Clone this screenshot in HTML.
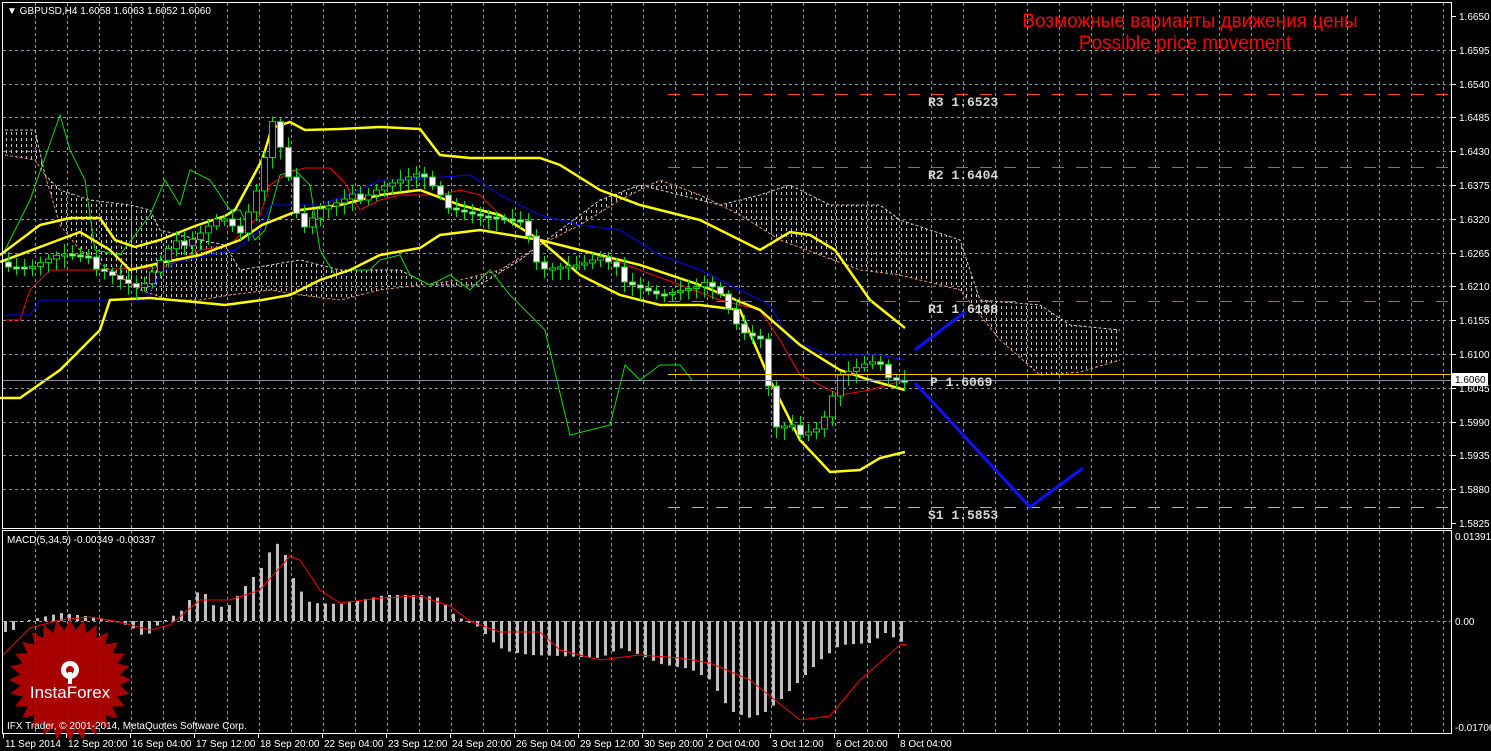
<!DOCTYPE html>
<html><head><meta charset="utf-8"><style>
html,body{margin:0;padding:0;background:#000;}
svg{display:block;}
text{font-family:"Liberation Sans",sans-serif;}
.m{font-family:"Liberation Mono",monospace;font-weight:bold;fill:#d8d8d8;font-size:13px;}
.ax{fill:#fff;font-size:10px;}
</style></head><body>
<svg id="s" width="1491" height="751" xmlns="http://www.w3.org/2000/svg">
<defs>
<pattern id="hp" width="5" height="6" patternUnits="userSpaceOnUse">
<rect x="1" y="0" width="1" height="3" fill="#cfc4c4"/>
</pattern>
</defs>
<rect width="1491" height="751" fill="#000"/>
<g id="grid"></g>
<g id="cloud"></g>
<g id="ind"></g>
<g id="candles"></g>
<g id="macd"></g>
<rect x="2.5" y="2.5" width="1449" height="526" fill="none" stroke="#fff" stroke-width="1"/>
<rect x="2.5" y="530.5" width="1449" height="203" fill="none" stroke="#fff" stroke-width="1"/>
<line x1="668" y1="94.5" x2="1451" y2="94.5" stroke="#ff4a10" stroke-dasharray="12,12"/>
<line x1="668" y1="167.5" x2="1451" y2="167.5" stroke="#e05020" stroke-dasharray="12,12"/>
<line x1="668" y1="301.5" x2="1451" y2="301.5" stroke="#ff4a10" stroke-dasharray="12,12"/>
<line x1="668" y1="507.5" x2="1451" y2="507.5" stroke="#d8a090" stroke-dasharray="12,12"/>
<line x1="668" y1="374.5" x2="1451" y2="374.5" stroke="#ffc000"/>
<line x1="3" y1="380.5" x2="1451" y2="380.5" stroke="#8090a0"/>
<text class="m" x="928" y="106">R3 1.6523</text>
<text class="m" x="928" y="179">R2 1.6404</text>
<text class="m" x="928" y="313">R1 1.6188</text>
<text class="m" x="930" y="386">P 1.6069</text>
<text class="m" x="928" y="519">S1 1.5853</text>
<polyline points="915,350 965,312" stroke="#1010ff" stroke-width="3" fill="none"/>
<polyline points="915,383 1030,507 1083,468" stroke="#1010ff" stroke-width="3" fill="none"/>
<text x="1190" y="27" fill="#ff0000" font-size="19" text-anchor="middle">Возможные варианты движения цены</text>
<text x="1185" y="49" fill="#ff0000" font-size="19" text-anchor="middle">Possible price movement</text>
<text x="7" y="14" fill="#fff" font-size="10">▼ GBPUSD,H4  1.6058 1.6063 1.6052 1.6060</text>
<text x="7" y="543" fill="#fff" font-size="10">MACD(5,34,5) -0.00349 -0.00337</text>
<g id="logo"></g>
<text x="7" y="729" fill="#fff" font-size="10">IFX Trader, © 2001-2014, MetaQuotes Software Corp.</text>
<g id="axis"></g>
<rect x="1452" y="373" width="36" height="13" fill="#fff"/>
<text x="1455" y="383" fill="#000" font-size="10">1.6060</text>
</svg>
<script>
(function(){
var NS="http://www.w3.org/2000/svg";
function el(p,t,a){var e=document.createElementNS(NS,t);for(var k in a)e.setAttribute(k,a[k]);document.getElementById(p).appendChild(e);return e;}
function pl(p,pts,c,w,extra){var a={points:pts.map(function(q){return q.join(",")}).join(" "),fill:"none",stroke:c,"stroke-width":w};for(var k in extra)a[k]=extra[k];return el(p,"polyline",a);}
function interp(pts,x){if(x<=pts[0][0])return pts[0][1];for(var i=1;i<pts.length;i++){if(x<=pts[i][0]){var a=pts[i-1],b=pts[i];return a[1]+(b[1]-a[1])*(x-a[0])/(b[0]-a[0]);}}return pts[pts.length-1][1];}
var k,i,x,y,t;
for(k=0;k<45;k++){x=35+32*k;el("grid","line",{x1:x+.5,y1:3,x2:x+.5,y2:528,stroke:"#8a93a0","stroke-dasharray":"3,3"});el("grid","line",{x1:x+.5,y1:531,x2:x+.5,y2:733,stroke:"#8a93a0","stroke-dasharray":"3,3"});}
var labels=["1.6650","1.6595","1.6540","1.6485","1.6430","1.6375","1.6320","1.6265","1.6210","1.6155","1.6100","1.6045","1.5990","1.5935","1.5880","1.5825"];
for(i=0;i<16;i++){y=Math.round(16+33.8*i);if(i>0&&i<15)el("grid","line",{x1:3,y1:y+.5,x2:1451,y2:y+.5,stroke:"#8a93a0","stroke-dasharray":"3,3"});el("grid","line",{x1:1452,y1:y+.5,x2:1456,y2:y+.5,stroke:"#fff"});t=el("grid","text",{x:1459,y:y+4,"class":"ax"});t.textContent=labels[i];}
el("grid","line",{x1:3,y1:621.5,x2:1451,y2:621.5,stroke:"#8a93a0","stroke-dasharray":"3,3"});
[["0.01391",540],["0.00",625],["-0.01706",731]].forEach(function(a){var t=el("grid","text",{x:1455,y:a[1],"class":"ax"});t.textContent=a[0];});
var up=[[5,130],[35,130],[45,175],[60,190],[90,200],[130,205],[150,210],[160,230],[200,240],[225,245],[240,270],[300,260],[340,270],[400,270],[430,285],[480,285],[520,260],[560,230],[600,200],[640,185],[680,195],[720,205],[760,195],[790,185],[830,205],[880,205],[900,220],[960,240],[980,300],[1040,305],[1070,325],[1120,330]];
var lo=[[5,155],[35,160],[45,175],[60,225],[80,250],[110,270],[140,290],[170,300],[200,300],[230,295],[270,290],[300,295],[340,300],[380,290],[420,285],[460,280],[500,270],[540,245],[580,225],[620,200],[660,180],[700,195],[740,215],[780,240],[820,255],[860,270],[900,275],[960,290],[1000,340],[1040,375],[1080,372],[1120,360]];
el("cloud","polygon",{points:up.concat(lo.slice().reverse()).map(function(q){return q.join(",")}).join(" "),fill:"url(#hp)"});
pl("cloud",up,"#d8c8c8",1,{"stroke-dasharray":"3,2"});
pl("cloud",lo,"#e09060",1,{"stroke-dasharray":"3,2"});
pl("ind",[[5,250],[30,200],[60,115],[70,150],[85,180],[95,250],[120,255],[150,215],[165,180],[180,205],[190,170],[210,180],[230,210],[240,210],[255,240],[265,230],[280,175],[295,170],[310,185],[320,250],[335,275],[350,270],[370,270],[380,260],[400,255],[410,275],[430,285],[450,275],[470,290],[490,270],[510,295],[545,330],[570,435],[590,430],[610,425],[625,365],[640,380],[660,365],[680,365],[692,380]],"#00dd00",1);
pl("ind",[[5,320],[20,320],[30,290],[50,270],[100,270],[130,268],[160,268],[180,260],[200,250],[230,245],[260,215],[270,185],[290,172],[305,168],[330,168],[345,183],[360,210],[380,200],[400,195],[440,195],[460,190],[480,195],[500,215],[540,240],[600,255],[680,285],[720,300],[760,310],[780,340],[800,375],[840,395],[870,390],[905,380]],"#ff0000",1);
pl("ind",[[5,315],[30,315],[40,300],[145,300],[160,275],[175,262],[210,255],[235,250],[260,230],[270,205],[320,205],[360,190],[380,180],[430,178],[470,175],[500,195],[540,215],[580,225],[620,230],[660,255],[700,270],[740,290],[770,305],[790,340],[830,355],[880,355],[905,360]],"#0000ff",1);
pl("ind",[[0,255],[40,225],[70,218],[100,218],[115,240],[135,247],[160,240],[195,226],[225,216],[235,210],[262,160],[272,128],[290,122],[305,130],[340,129],[380,127],[420,129],[440,155],[470,158],[540,158],[560,165],[600,190],[640,205],[700,220],[760,250],[790,232],[810,235],[835,250],[870,300],[905,328]],"#ffff00",2.5);
pl("ind",[[0,262],[40,247],[80,232],[110,250],[130,270],[160,263],[200,255],[240,240],[262,225],[300,210],[340,205],[380,195],[420,190],[460,205],[500,215],[540,240],[580,250],[640,265],[700,285],[760,310],[800,345],[840,370],[870,380],[905,390]],"#ffff00",2.5);
pl("ind",[[0,398],[20,398],[60,370],[100,330],[110,300],[150,298],[195,302],[225,305],[262,300],[290,295],[320,280],[350,270],[380,255],[420,248],[440,235],[480,230],[540,240],[580,275],[620,295],[660,305],[700,305],[740,310],[770,380],[800,440],[830,472],[860,470],[880,458],[905,452]],"#ffff00",2.5);
var cp=[[8,262],[30,265],[60,255],[100,265],[140,290],[170,250],[200,230],[220,215],[240,235],[262,180],[270,110],[285,160],[300,230],[320,210],[340,205],[380,185],[420,175],[440,200],[480,215],[520,225],[540,265],[580,265],[600,260],[620,275],[660,295],[700,290],[715,280],[740,330],[760,340],[775,430],[800,430],[820,425],[840,375],[870,365],[900,378]];
var prev=interp(cp,0);
for(x=8;x<=904;x+=8){var c=interp(cp,x)+((x*37)%11-5);var o=prev;prev=c;var tp=Math.min(o,c),bt=Math.max(o,c);if(bt-tp<2){bt=tp+2;}
var wt=tp-4-((x*13)%7),wb=bt+4+((x*17)%9);
el("candles","line",{x1:x+.5,y1:wt,x2:x+.5,y2:wb,stroke:"#00dd00"});
el("candles","rect",{x:x-2.5,y:tp,width:6,height:bt-tp,fill:(c>o?"#fff":"#000"),stroke:"#00dd00","stroke-width":1});}
var mh=[[5,632],[13,630],[20,622],[60,613],[70,614],[100,618],[130,626],[145,638],[155,627],[165,620],[180,612],[195,592],[205,594],[215,608],[230,605],[240,592],[250,580],[260,570],[265,560],[275,541],[285,555],[295,584],[310,603],[340,604],[385,595],[420,595],[440,598],[450,612],[465,621],[480,628],[490,640],[500,648],[510,652],[530,655],[560,656],[600,658],[620,648],[640,655],[660,664],[690,669],[710,680],[730,711],[750,718],[765,712],[780,700],[800,680],[820,660],[840,645],[870,643],[885,633],[907,645]];
for(x=5;x<=907;x+=8){var v=interp(mh,x);var a=Math.min(v,621),b=Math.max(v,621);el("macd","rect",{x:x-1,y:a,width:3,height:Math.max(1,b-a),fill:"#c0c0c0"});}
pl("macd",[[3,655],[30,628],[60,620],[90,617],[120,622],[150,630],[170,625],[200,600],[230,600],[260,590],[290,556],[300,560],[320,590],[340,603],[380,598],[420,596],[450,606],[470,621],[500,632],[540,632],[560,650],[600,660],[640,655],[680,658],[710,663],[750,680],[800,720],[830,716],[860,680],[900,645],[907,644]],"#ff0000",1);
var pts=[];for(i=0;i<56;i++){var r=i%2?50:61,an=i*Math.PI/28;pts.push((70+r*Math.cos(an)).toFixed(1)+","+(680+r*Math.sin(an)).toFixed(1));}
el("logo","polygon",{points:pts.join(" "),fill:"#b80000","fill-opacity":"0.9"});
el("logo","circle",{cx:70,cy:670,r:9,fill:"#fff"});
el("logo","circle",{cx:70,cy:670,r:4,fill:"#b80000"});
el("logo","rect",{x:68,y:672,width:4,height:12,fill:"#fff"});
t=el("logo","text",{x:70,y:698,fill:"#fff","font-size":"17","text-anchor":"middle"});t.textContent="InstaForex";
[["11 Sep 2014",3],["12 Sep 20:00",66],["16 Sep 04:00",130],["17 Sep 12:00",194],["18 Sep 20:00",258],["22 Sep 04:00",322],["23 Sep 12:00",386],["24 Sep 20:00",450],["26 Sep 04:00",514],["29 Sep 12:00",578],["30 Sep 20:00",642],["2 Oct 04:00",706],["3 Oct 12:00",770],["6 Oct 20:00",834],["8 Oct 04:00",898]].forEach(function(a){el("axis","line",{x1:a[1]+.5,y1:734,x2:a[1]+.5,y2:738,stroke:"#fff"});var t=el("axis","text",{x:a[1]+2,y:747,"class":"ax"});t.textContent=a[0];});
})();
</script>
</body></html>
